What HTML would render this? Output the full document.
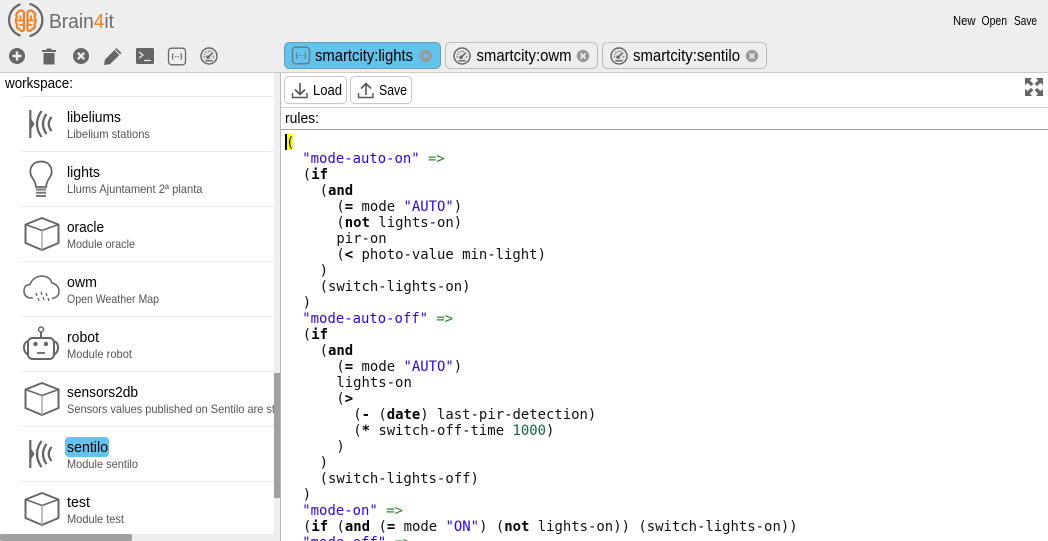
<!DOCTYPE html>
<html><head><meta charset="utf-8"><title>Brain4it</title>
<style>
html,body{margin:0;padding:0;width:1048px;height:541px;overflow:hidden;background:#fff}
svg{display:block}
text{font-family:"Liberation Sans",sans-serif;fill:#000;white-space:pre}
.t{font-size:15px}
.s{font-size:12px;fill:#555}
.c{font-family:"DejaVu Sans Mono",monospace;font-size:13.93px;fill:#111}
.c .k{font-weight:bold;fill:#000}
.c .q{fill:#3300ee}
.c .a{fill:#228822}
.c .n{fill:#116644}
</style></head><body>
<svg width="1048" height="541" viewBox="0 0 1048 541" xmlns="http://www.w3.org/2000/svg">
<defs>
<clipPath id="lc"><rect x="0" y="73" width="274" height="461"/></clipPath>
<g id="cube" fill="none" stroke="#666" stroke-width="2" stroke-linejoin="round">
<path d="M42 218 L58.500 224.500 V243 L42 250 L25.500 243 V224.500 Z"/>
<path d="M25.500 224.500 L42 230.500 L58.500 224.500" stroke-width="1.500"/>
<path d="M42 230.500 V250" stroke="#aaa" stroke-width="1.500"/>
</g>
<g id="wave" fill="none" stroke="#666">
<path d="M30.300 110 V138" stroke-width="2.200"/><path d="M31 119.500 L34 124 L31 128.500 Z" fill="#666" stroke-width="1"/>
<path d="M41.500 111 Q32.500 124 41.500 137" stroke-width="2.300"/>
<path d="M46.500 114 Q39.500 124 46.500 134" stroke-width="2.300"/>
<path d="M51.500 117 Q46 124 51.500 131" stroke-width="2.300"/>
</g>
<g id="gauge" fill="none" stroke="#666">
<circle cx="0" cy="0" r="8" stroke-width="1.500"/>
<circle cx="0" cy="0" r="6" fill="#dedede" stroke="none"/>
<path d="M-5.300 1 L-4 .8 M-5 -2 L-3.800 -1.500 M-3.500 -4.300 L-2.700 -3.300 M-.8 -5.500 L-.6 -4.200 M2 -5.200 L1.500 -4 M5.300 1 L4 .8" stroke-width=".9" stroke="#555"/>
<path d="M-1 1.500 L3.800 -3.400" stroke-width="1.500"/>
<circle cx="-1" cy="1.200" r="1.700" fill="#666" stroke="none"/>
<path d="M-3.700 4.800 H3.700" stroke-width="1.400"/>
</g>
<g id="brace" fill="none" stroke="#666">
<rect x="-8.500" y="-8.300" width="17" height="16.600" rx="3" stroke-width="1.300"/>
<path d="M-3.700 -3.200 Q-5.500 0 -3.700 3.200 M3.700 -3.200 Q5.500 0 3.700 3.200" stroke-width="1.100"/>
<path d="M-2.200 0 H-1.200 M-.5 0 H.5 M1.200 0 H2.200" stroke-width="1.100"/>
</g>
</defs>

<!-- top bar -->
<rect x="0" y="0" width="1048" height="72" fill="#eeeeee"/>
<rect x="0" y="72" width="1048" height="1" fill="#cccccc"/>

<!-- logo -->
<g fill="none">
<path d="M20.500 4.300 A16.500 16.500 0 0 0 20.500 35.700" stroke="#666" stroke-width="2.200"/>
<path d="M29.500 3.900 A16.500 16.500 0 0 1 29.500 36.100" stroke="#666" stroke-width="2.200"/>
<path d="M24 12 Q20.500 8.800 18.500 12 Q15 13.500 17 17 Q14.500 21 17 24.500 Q16 28.500 19.500 29 Q21.500 32.500 24 30 Z M27.500 12 Q31 8.800 33 12 Q36.500 13.500 34.500 17 Q37 21 34.500 24.500 Q35.500 28.500 32 29 Q30 32.500 27.500 30 Z" stroke="#f57f20" stroke-width="2.100" stroke-linejoin="round"/>
<path d="M17 20.500 H24 M20.500 15.500 V20 M19.500 25.500 L24 24 M27.500 20.500 H34.500 M31 15.500 V20 M32 25.500 L27.500 24" stroke="#f57f20" stroke-width="1.800"/>
</g>
<text x="49" y="28" font-size="20" style="fill:#6c6c6c" textLength="65" lengthAdjust="spacingAndGlyphs">Brain<tspan style="fill:#f57f20">4</tspan>it</text>

<text x="953" y="25" font-size="13" textLength="22.500" lengthAdjust="spacingAndGlyphs">New</text>
<text x="981.500" y="25" font-size="13" textLength="25.500" lengthAdjust="spacingAndGlyphs">Open</text>
<text x="1014" y="25" font-size="13" textLength="23" lengthAdjust="spacingAndGlyphs">Save</text>

<!-- toolbar icons -->
<circle cx="17" cy="56" r="8" fill="#666"/>
<path d="M17 51.500 V60.500 M12.500 56 H21.500" stroke="#eee" stroke-width="2.400"/>
<path d="M42 50 H56 V52 H42 Z M46.500 50 V48.500 H51.500 V50 Z M43.500 53 H54.500 V64.500 H43.500 Z" fill="#666"/>
<circle cx="81" cy="56" r="8" fill="#666"/>
<path d="M77.800 52.800 L84.200 59.200 M84.200 52.800 L77.800 59.200" stroke="#eee" stroke-width="2.300"/>
<path d="M104 65 L105 59.500 L116.500 48 L121.500 53 L110 64.300 Z" fill="#666"/>
<path d="M115 50 L120 55" stroke="#eee" stroke-width="1"/>
<rect x="136" y="48" width="18" height="16" rx="1.500" fill="#666"/>
<path d="M139 52 L143 55 L139 58 M144 60.500 H151" fill="none" stroke="#eee" stroke-width="1.200"/>
<use href="#brace" transform="translate(177 56.500)"/>
<use href="#gauge" transform="translate(209 56)"/>

<!-- tabs -->
<rect x="284.500" y="42.500" width="156" height="26" rx="5" fill="#62c3ec" stroke="#6b9db5"/>
<rect x="445.500" y="42.500" width="152" height="26" rx="5" fill="#eeeeee" stroke="#bdbdbd"/>
<rect x="602.500" y="42.500" width="164" height="26" rx="5" fill="#eeeeee" stroke="#bdbdbd"/>
<use href="#brace" transform="translate(301 55.500)" opacity=".8"/>
<use href="#gauge" transform="translate(462 56)"/>
<use href="#gauge" transform="translate(619 56)"/>
<text x="315" y="61" font-size="17" textLength="98" lengthAdjust="spacingAndGlyphs">smartcity:lights</text>
<text x="476.500" y="61" font-size="17" textLength="95" lengthAdjust="spacingAndGlyphs">smartcity:owm</text>
<text x="633" y="61" font-size="17" textLength="107" lengthAdjust="spacingAndGlyphs">smartcity:sentilo</text>
<circle cx="426" cy="56" r="6.200" fill="#999"/>
<path d="M423.500 53.500 L428.500 58.500 M428.500 53.500 L423.500 58.500" stroke="#62c3ec" stroke-width="1.600"/>
<circle cx="583" cy="56" r="6.200" fill="#999"/>
<path d="M580.500 53.500 L585.500 58.500 M585.500 53.500 L580.500 58.500" stroke="#eee" stroke-width="1.600"/>
<circle cx="752" cy="56" r="6.200" fill="#999"/>
<path d="M749.500 53.500 L754.500 58.500 M754.500 53.500 L749.500 58.500" stroke="#eee" stroke-width="1.600"/>

<!-- right toolbar -->
<rect x="284.500" y="76.500" width="62" height="27" rx="4" fill="#fff" stroke="#c8c8c8"/>
<rect x="350.500" y="76.500" width="61" height="27" rx="4" fill="#fff" stroke="#c8c8c8"/>
<path d="M300 83 V94 M295 89.500 L300 94.500 L305 89.500" fill="none" stroke="#555" stroke-width="1.600"/>
<path d="M292.500 93 V97.500 H307 V93" fill="none" stroke="#555" stroke-width="1.400"/>
<path d="M366 95 V83.500 M361 88.500 L366 83.500 L371 88.500" fill="none" stroke="#555" stroke-width="1.600"/>
<path d="M358.500 93 V97.500 H373 V93" fill="none" stroke="#555" stroke-width="1.400"/>
<text x="313" y="95" class="t" textLength="29" lengthAdjust="spacingAndGlyphs">Load</text>
<text x="379" y="95" class="t" textLength="28" lengthAdjust="spacingAndGlyphs">Save</text>
<path d="M1025 78 H1032 L1030 80.500 L1033.500 84 L1031 86 L1027.500 83 L1025 85 Z M1043 78 H1036 L1038 80.500 L1034.500 84 L1037 86 L1040.500 83 L1043 85 Z M1025 96 H1032 L1030 93.500 L1033.500 90 L1031 88 L1027.500 91 L1025 89 Z M1043 96 H1036 L1038 93.500 L1034.500 90 L1037 88 L1040.500 91 L1043 89 Z" fill="#666"/>
<rect x="281" y="107" width="767" height="1" fill="#cccccc"/>
<text x="285" y="123" class="t" textLength="34" lengthAdjust="spacingAndGlyphs">rules:</text>
<rect x="281" y="129" width="767" height="1" fill="#a0a0a0"/>

<!-- left panel -->
<text x="5" y="88" class="t" textLength="68" lengthAdjust="spacingAndGlyphs">workspace:</text>
<g fill="#eaeaea">
<rect x="21" y="96" width="253" height="1"/><rect x="21" y="151" width="253" height="1"/><rect x="21" y="206" width="253" height="1"/><rect x="21" y="261" width="253" height="1"/><rect x="21" y="316" width="253" height="1"/><rect x="21" y="371" width="253" height="1"/><rect x="21" y="426" width="253" height="1"/><rect x="21" y="481" width="253" height="1"/>
</g>

<use href="#wave"/>
<use href="#wave" transform="translate(0 330)"/>
<!-- bulb -->
<path d="M36 187 Q35.500 182 32.500 178 Q29 173 31 167.500 Q34 161.500 41 161.500 Q48 161.500 51 167.500 Q53 173 49.500 178 Q46.500 182 46 187 Z" fill="none" stroke="#666" stroke-width="1.800"/>
<path d="M36 189.500 H46 M36 192.800 H46 M36 196 H46" stroke="#777" stroke-width="2"/>
<use href="#cube"/>
<use href="#cube" transform="translate(0 165)"/>
<use href="#cube" transform="translate(0 275)"/>
<!-- cloud -->
<path d="M33 298 H30 Q24 297 24 291 Q24 285 30 284.500 Q33 276.500 42 276 Q50 276.500 52 283 Q59 285 59 291.500 Q59 297 52 298.500" fill="none" stroke="#666" stroke-width="1.500"/>
<path d="M36 293 L37 296 M41 292 L42 295 M46 293 L47 296 M38 298 L39 301 M43 297 L44 300 M48 298 L49 301" stroke="#666" stroke-width="1.300"/>
<!-- robot -->
<rect x="28" y="338" width="26" height="21" rx="4.500" fill="none" stroke="#666" stroke-width="2"/>
<path d="M28 341 Q23.500 343 24 348 Q24 352 28 355 M54 341 Q58.500 343 58 348 Q58 352 54 355" fill="none" stroke="#666" stroke-width="2"/>
<path d="M41 338 V332" stroke="#666" stroke-width="2"/>
<circle cx="41" cy="329.500" r="2.500" fill="none" stroke="#666" stroke-width="1.500"/>
<circle cx="35.500" cy="344" r="2.200" fill="#666"/><circle cx="46" cy="344" r="2.200" fill="#666"/>
<path d="M37 353 H45" stroke="#666" stroke-width="1.800"/>

<rect x="65" y="437" width="44" height="20" rx="4" fill="#62c3ec"/>

<g clip-path="url(#lc)">
<text x="67" y="122" class="t" textLength="54" lengthAdjust="spacingAndGlyphs">libeliums</text>
<text x="67" y="138" class="s" textLength="83" lengthAdjust="spacingAndGlyphs">Libelium stations</text>
<text x="67" y="177" class="t" textLength="33" lengthAdjust="spacingAndGlyphs">lights</text>
<text x="67" y="193" class="s" textLength="135.500" lengthAdjust="spacingAndGlyphs">Llums Ajuntament 2ª planta</text>
<text x="67" y="232" class="t" textLength="37" lengthAdjust="spacingAndGlyphs">oracle</text>
<text x="67" y="248" class="s" textLength="68" lengthAdjust="spacingAndGlyphs">Module oracle</text>
<text x="67" y="287" class="t" textLength="30" lengthAdjust="spacingAndGlyphs">owm</text>
<text x="67" y="303" class="s" textLength="92" lengthAdjust="spacingAndGlyphs">Open Weather Map</text>
<text x="67" y="342" class="t" textLength="32" lengthAdjust="spacingAndGlyphs">robot</text>
<text x="67" y="358" class="s" textLength="65" lengthAdjust="spacingAndGlyphs">Module robot</text>
<text x="67" y="397" class="t" textLength="71" lengthAdjust="spacingAndGlyphs">sensors2db</text>
<text x="67" y="413" class="s" textLength="208" lengthAdjust="spacingAndGlyphs">Sensors values published on Sentilo are st</text>
<text x="67" y="452" class="t" textLength="41" lengthAdjust="spacingAndGlyphs">sentilo</text>
<text x="67" y="468" class="s" textLength="71" lengthAdjust="spacingAndGlyphs">Module sentilo</text>
<text x="67" y="507" class="t" textLength="23" lengthAdjust="spacingAndGlyphs">test</text>
<text x="67" y="523" class="s" textLength="57" lengthAdjust="spacingAndGlyphs">Module test</text>
</g>

<!-- scrollbars -->
<rect x="274" y="73" width="6" height="461" fill="#eeeeee"/>
<rect x="274" y="373" width="6" height="125" fill="#a0a0a0"/>
<rect x="0" y="534" width="280" height="7" fill="#eeeeee"/>
<rect x="0" y="534" width="132" height="7" rx="2" fill="#a0a0a0"/>
<rect x="280" y="73" width="1" height="468" fill="#bbbbbb"/>

<!-- code -->
<rect x="287" y="134" width="6" height="16" fill="#ffff00"/>
<rect x="285" y="134" width="2" height="16" fill="#000"/>
<g class="c" xml:space="preserve">
<text class="c" x="286" y="147">(</text>
<text class="c" x="302.300" y="163"><tspan class="q">"mode-auto-on"</tspan> <tspan class="a">=&gt;</tspan></text>
<text class="c" x="302.800" y="179">(<tspan class="k">if</tspan></text>
<text class="c" x="319.600" y="195">(<tspan class="k">and</tspan></text>
<text class="c" x="336.400" y="211">(<tspan class="k">=</tspan> mode <tspan class="q">"AUTO"</tspan>)</text>
<text class="c" x="336.400" y="227">(<tspan class="k">not</tspan> lights-on)</text>
<text class="c" x="336.400" y="243">pir-on</text>
<text class="c" x="336.400" y="259">(<tspan class="k">&lt;</tspan> photo-value min-light)</text>
<text class="c" x="319.600" y="275">)</text>
<text class="c" x="319.600" y="291">(switch-lights-on)</text>
<text class="c" x="302.800" y="307">)</text>
<text class="c" x="302.300" y="323"><tspan class="q">"mode-auto-off"</tspan> <tspan class="a">=&gt;</tspan></text>
<text class="c" x="302.800" y="339">(<tspan class="k">if</tspan></text>
<text class="c" x="319.600" y="355">(<tspan class="k">and</tspan></text>
<text class="c" x="336.400" y="371">(<tspan class="k">=</tspan> mode <tspan class="q">"AUTO"</tspan>)</text>
<text class="c" x="336.400" y="387">lights-on</text>
<text class="c" x="336.400" y="403">(<tspan class="k">&gt;</tspan></text>
<text class="c" x="353.200" y="419">(<tspan class="k">-</tspan> (<tspan class="k">date</tspan>) last-pir-detection)</text>
<text class="c" x="353.200" y="435">(<tspan class="k">*</tspan> switch-off-time <tspan class="n">1000</tspan>)</text>
<text class="c" x="336.400" y="451">)</text>
<text class="c" x="319.600" y="467">)</text>
<text class="c" x="319.600" y="483">(switch-lights-off)</text>
<text class="c" x="302.800" y="499">)</text>
<text class="c" x="302.300" y="515"><tspan class="q">"mode-on"</tspan> <tspan class="a">=&gt;</tspan></text>
<text class="c" x="303" y="531">(<tspan class="k">if</tspan> (<tspan class="k">and</tspan> (<tspan class="k">=</tspan> mode <tspan class="q">"ON"</tspan>) (<tspan class="k">not</tspan> lights-on)) (switch-lights-on))</text>
<text class="c" x="302.300" y="547"><tspan class="q">"mode-off"</tspan> <tspan class="a">=&gt;</tspan></text>
</g>
</svg>
</body></html>
